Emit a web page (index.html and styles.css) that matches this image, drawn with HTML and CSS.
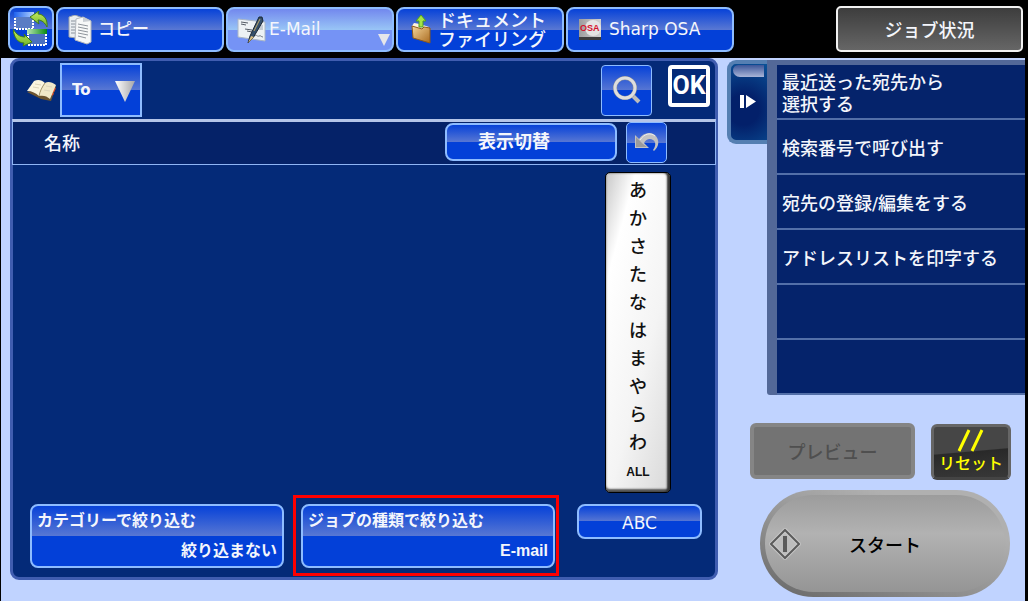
FILE: index.html
```html
<!DOCTYPE html>
<html lang="ja">
<head>
  <meta charset="UTF-8">
  <title>アドレス帳</title>
  <link rel="stylesheet" href="styles.css">
</head>
<body>

  <header class="topbar">
    <button type="button" class="btn mode-switch" aria-label="モード切替">
      <svg width="36" height="36" viewBox="0 0 36 36">
        <defs>
          <linearGradient id="green" x1="0" y1="0" x2="0" y2="1">
            <stop offset="0" stop-color="#c9ee62"/>
            <stop offset="1" stop-color="#6fb32a"/>
          </linearGradient>
          <linearGradient id="blueBar"><stop offset="0" stop-color="#1f62ee"/><stop offset="1" stop-color="#b4d4ff"/></linearGradient>
          <linearGradient id="greenBar"><stop offset="0" stop-color="#b9e6b4"/><stop offset="1" stop-color="#078a12"/></linearGradient>
        </defs>
        <rect x="2" y="3" width="18" height="15" fill="#5a7cc4" stroke="#fff" stroke-width="2" stroke-dasharray="2 1"/>
        <rect x="1" y="1" width="20" height="5" fill="url(#blueBar)"/>
        <rect x="15" y="20" width="18" height="14" fill="#4a70c0" stroke="#fff" stroke-width="2" stroke-dasharray="2 1"/>
        <rect x="14" y="18" width="20" height="5" fill="url(#greenBar)"/>
        <path d="M17 6 L26 0 L25 3 C31 3 35 9 34 16 C32 12 29 9 25 9 L26 13 Z" fill="url(#green)" stroke="#3f7d18" stroke-width="1"/>
        <path d="M19 31 L10 35 L11 32 C5 32 1 27 0 18 C4 24 7 26 12 26 L11 23 Z" fill="url(#green)" stroke="#3f7d18" stroke-width="1"/>
      </svg>
    </button>

    <nav class="tabs">
      <button type="button" class="btn tab">
        <svg width="26" height="30" viewBox="0 0 26 30">
          <path d="M2 2 L8 0 L16 3 V24 L2 22 Z" fill="#e9edf0" stroke="#9aa2ad" stroke-width="1"/>
          <path d="M4 6h5M4 9h5M4 12h5M4 15h5M4 18h5" stroke="#8a929c"/>
          <path d="M9 4 L16 2 L24 6 V27 L20 29 L8 25 Z" fill="#f7f8f8" stroke="#b2b7bd" stroke-width="1"/>
          <path d="M16 2 L16 7 L24 6 Z" fill="#c9ced4"/>
          <path d="M11 9l10 2M11 12l10 2M11 15l10 2M11 18l10 2M11 21l8 2" stroke="#8f959c"/>
        </svg>
        <span>コピー</span>
      </button>
      <button type="button" class="btn tab tab-active">
        <svg width="30" height="28" viewBox="0 0 30 28">
          <path d="M1 3 L28 6 L28 25 L1 21 Z" fill="#edf1f4" stroke="#aab6c6" stroke-width="1"/>
          <path d="M4 6l7 1M4 8l5 1M8 13l7 1M10 15l5 1" stroke="#555c66"/>
          <path d="M21 9h5v5h-5z" fill="#c4ccd4"/>
          <path d="M17 20c3-2 3 1 5 0 2-1 2 1 4 1" fill="none" stroke="#777e88"/>
          <path d="M22 1 L25 1 L26 5 L16 22 L11 27 L13 20 Z" fill="#35506b" stroke="#1b2835" stroke-width="1"/>
          <path d="M14 20 L11 27 L17 21 Z" fill="#d9bd82"/>
          <path d="M23 3 L17 15" stroke="#c1a765" stroke-width="1"/>
        </svg>
        <span>E-Mail</span>
        <svg class="tab-arrow" width="12" height="12" viewBox="0 0 12 12"><path d="M0 0h12L6 12z" fill="#e6e6ea"/></svg>
      </button>
      <button type="button" class="btn tab tab-two-line">
        <svg width="22" height="30" viewBox="0 0 22 30">
          <defs>
            <linearGradient id="folder" x1="0" y1="0" x2="1" y2="1">
              <stop offset="0" stop-color="#f6d79a"/><stop offset="1" stop-color="#a96a20"/>
            </linearGradient>
          </defs>
          <path d="M1 11 L3 8 L9 9 L18 12 L18 15 L2 14 Z" fill="#fff4dc"/>
          <path d="M10 0 L15 6 L12 6 L12 12 L8 12 L8 6 L5 6 Z" fill="#a4e445" stroke="#4f9a24" stroke-width="1"/>
          <path d="M1 11 L11 14 L13 12 L19 13 L19 28 L2 23 Z" fill="url(#folder)" stroke="#8e5a1c" stroke-width="1"/>
        </svg>
        <span>ドキュメント<br>ファイリング</span>
      </button>
      <button type="button" class="btn tab tab-osa">
        <svg width="22" height="22" viewBox="0 0 22 22">
          <defs>
            <linearGradient id="osa"><stop offset="0" stop-color="#9c9c9e"/><stop offset="1" stop-color="#d2d2d2"/></linearGradient>
          </defs>
          <rect width="22" height="21" fill="url(#osa)"/>
          <circle cx="14" cy="9" r="8" fill="#e4e4e4"/>
          <rect y="18" width="22" height="3" fill="#3b3b3d"/>
          <text x="1" y="12" class="osa-mark">OSA</text>
        </svg>
        <span>Sharp OSA</span>
      </button>
    </nav>

    <button type="button" class="job-status">ジョブ状況</button>
  </header>

  <main class="screen">
    <section class="panel">
      <div class="panel-head">
        <svg width="30" height="24" viewBox="0 0 30 24">
          <path d="M0 14 L14 21 L24 23 L29 9 L28 7 Z" fill="#6d5430"/>
          <path d="M26 14l2-4M25 17l1-2" stroke="#df4a2b" stroke-width="2"/>
          <path d="M7 3 C11 1 15 2 18 5 C15 9 13 13 12 18 C9 15 5 13 0 13 Z" fill="#fbf5de"/>
          <path d="M18 5 C21 3 25 4 29 7 L23 21 C20 18 16 17 12 18 C13 13 15 9 18 5 Z" fill="#f1e8c8"/>
          <path d="M18 5 C15 9 13 13 12 18" fill="none" stroke="#a89a70"/>
          <path d="M8 6l6 1M6 9l6 1M19 8l6 1M17 12l6 1" stroke="#ddd5ba"/>
        </svg>
        <div class="address-type">
          <select class="btn" aria-label="宛先の種類"><option>To</option></select>
          <svg width="20" height="21" viewBox="0 0 20 21">
            <defs>
              <linearGradient id="silver"><stop offset="0" stop-color="#fff"/><stop offset="1" stop-color="#a5a5a8"/></linearGradient>
            </defs>
            <path d="M0 0h20L10 21z" fill="url(#silver)"/>
          </svg>
        </div>
        <button type="button" class="btn search" aria-label="検索">
          <svg width="28" height="28" viewBox="0 0 28 28">
            <path d="M18 18 L26 26" stroke="#bcbcbc" stroke-width="4"/>
            <circle cx="12" cy="12" r="10" fill="none" stroke="#8b8e96" stroke-width="4"/>
            <circle cx="12" cy="12" r="10" fill="none" stroke="#dedede" stroke-width="3"/>
          </svg>
        </button>
        <button type="button" class="ok">OK</button>
      </div>

      <div class="name-bar">
        <span class="name-label">名称</span>
        <button type="button" class="btn switch-view">表示切替</button>
        <button type="button" class="btn undo" aria-label="戻る">
          <svg width="26" height="22" viewBox="0 0 26 22">
            <path d="M1 4 L5 8 C9 2 16 0 21 4 C26 9 25 16 20 20 L19 19 C22 15 22 11 19 9 C16 7 12 8 10 12 L15 17 L1 17 Z" fill="#c2c2c2"/>
            <path d="M2 6 V16 H13 L9 13" fill="#9b9b9d"/>
            <path d="M6 9 C10 3 16 1 21 5" fill="none" stroke="#ececec"/>
          </svg>
        </button>
      </div>

      <div class="address-list">
        <nav class="kana-index">
          <button type="button">あ</button>
          <button type="button">か</button>
          <button type="button">さ</button>
          <button type="button">た</button>
          <button type="button">な</button>
          <button type="button">は</button>
          <button type="button">ま</button>
          <button type="button">や</button>
          <button type="button">ら</button>
          <button type="button">わ</button>
          <button type="button" class="kana-all">ALL</button>
        </nav>
      </div>

      <div class="filters">
        <button type="button" class="btn filter">
          <span>カテゴリーで絞り込む</span>
          <span class="filter-value">絞り込まない</span>
        </button>
        <div class="highlight">
          <button type="button" class="btn filter">
            <span>ジョブの種類で絞り込む</span>
            <span class="filter-value">E-mail</span>
          </button>
        </div>
        <button type="button" class="btn abc">ABC</button>
      </div>
    </section>

    <aside class="side">
      <div class="menu">
        <button type="button" class="menu-handle" aria-label="メニューを閉じる">
          <svg width="16" height="14" viewBox="0 0 16 14"><path d="M0 0h4v13H0zM6 0l10 6.5L6 13z" fill="#fff"/></svg>
        </button>
        <ul class="menu-list">
          <li><button type="button">最近送った宛先から<br>選択する</button></li>
          <li><button type="button">検索番号で呼び出す</button></li>
          <li><button type="button">宛先の登録/編集をする</button></li>
          <li><button type="button">アドレスリストを印字する</button></li>
          <li></li>
          <li></li>
        </ul>
      </div>

      <div class="actions">
        <button type="button" class="preview" disabled>プレビュー</button>
        <button type="button" class="reset">
          <svg width="28" height="23" viewBox="0 0 28 23"><path d="M2 22 L12 1 M15 22 L25 1" stroke="#ff0" stroke-width="3"/></svg>
          <span>リセット</span>
        </button>
      </div>

      <button type="button" class="start">
        <svg width="32" height="32" viewBox="0 0 32 32">
          <path d="M16 2 L30 16 L16 30 L2 16 Z" fill="#bdbdbd" stroke="#c9c9c9" stroke-width="4"/>
          <path d="M16 2 L30 16 L16 30 L2 16 Z" fill="none" stroke="#5b5b5b" stroke-width="2"/>
          <rect x="14" y="8" width="4" height="16" fill="#5b5b5b"/>
        </svg>
        <span>スタート</span>
      </button>
    </aside>
  </main>

</body>
</html>
```
FILE: styles.css
```css
* {
  box-sizing: border-box;
}
body {
  margin: 0;
  min-height: 100vh;
  display: flex;
  flex-direction: column;
  background: #000;
  color: #f4f6fc;
  font-family: "DejaVu Sans", "Noto Sans CJK JP", sans-serif;
  font-size: 18px;
  font-weight: 500;
}
button,
select {
  margin: 0;
  padding: 0;
  border: none;
  color: inherit;
  font: inherit;
  cursor: pointer;
}
svg {
  display: block;
  flex: none;
}

/* shared glossy blue button */
.btn {
  border: 2px solid #8ebcff;
  border-radius: 8px;
  background: linear-gradient(#0742d8, #5877d3 50%, #0340d8 50%);
}

/* top bar */
.topbar {
  display: flex;
  gap: 2px;
  height: 58px;
  padding: 6px 5px 6px 8px;
}
.mode-switch {
  flex: none;
  width: 46px;
  display: flex;
  align-items: center;
  justify-content: center;
}
.tabs {
  flex: 1;
  display: flex;
  gap: 2px;
  padding-top: 1px;
}
.tab {
  position: relative;
  flex: 0 1 168px;
  display: flex;
  align-items: center;
  gap: 5px;
  padding-left: 9px;
  font-size: 17px;
  line-height: 19px;
  text-align: left;
  white-space: nowrap;
}
.tab-active {
  gap: 2px;
  background: linear-gradient(#7288ee, #98c4f6 50%, #7593f5 50%);
}
.tab-two-line {
  padding-left: 13px;
  font-size: 18px;
}
.tab-osa {
  gap: 8px;
  padding-left: 11px;
}
.tab-arrow {
  position: absolute;
  right: 2px;
  bottom: 4px;
}
.osa-mark {
  font: bold 9px "Liberation Sans", sans-serif;
  fill: #d5122c;
}
.job-status {
  flex: none;
  width: 187px;
  border: 2px solid #f2f2f2;
  border-radius: 5px;
  background: linear-gradient(#3d3d3d, #666);
}

/* main area */
.screen {
  flex: 1;
  display: grid;
  grid-template-columns: minmax(0, 1fr) 298px;
  gap: 9px;
  margin: 0 3px 0 1px;
  padding-left: 9px;
  background: #c0d3ff;
}
.panel {
  display: flex;
  flex-direction: column;
  align-self: start;
  border: 3px solid #405db0;
  border-radius: 9px;
  background: #042a78;
}
.panel-head {
  display: flex;
  align-items: center;
  height: 58px;
  padding: 0 5px 0 14px;
}
.address-type {
  position: relative;
  margin-left: 3px;
}
.address-type select {
  appearance: none;
  display: block;
  width: 82px;
  height: 54px;
  padding-left: 10px;
  border-radius: 0;
  font-size: 15px;
  font-weight: bold;
}
.address-type svg {
  position: absolute;
  top: 18px;
  right: 7px;
  pointer-events: none;
}
.search {
  width: 51px;
  height: 51px;
  margin-left: auto;
  display: flex;
  align-items: center;
  justify-content: center;
  border-width: 1px;
  border-radius: 4px;
}
.ok {
  width: 42px;
  height: 42px;
  margin: 0 0 9px 16px;
  border: 4px solid #fff;
  border-radius: 4px;
  background: #042a78;
  color: #fff;
  font: bold 25px/34px "Liberation Sans Narrow", Roboto, sans-serif;
}
.name-bar {
  display: flex;
  align-items: center;
  height: 46px;
  margin: 0 -1px;
  padding: 0 48px 2px 31px;
  border: 1px solid #8fb5f5;
  border-top: 3px solid #b5c5e8;
  background: #052268;
}
.name-label {
  flex: 1;
}
.switch-view {
  width: 172px;
  height: 38px;
  margin-right: 9px;
  padding-right: 34px;
  font-weight: bold;
  line-height: 32px;
}
.undo {
  width: 41px;
  height: 41px;
  display: flex;
  align-items: center;
  justify-content: center;
  border-width: 1px;
  border-radius: 5px;
}
.address-list {
  display: flex;
  justify-content: flex-end;
  padding: 7px 44px 2px 0;
}
.kana-index {
  display: flex;
  flex-direction: column;
  width: 66px;
  padding: 4px 0 7px;
  border: 1px solid #000;
  border-radius: 5px;
  background: linear-gradient(105deg, #c8c8c8, #fff 20%, #f4f4f4 60%, #d8d8d8);
  box-shadow: inset -3px 0 2px #333, inset 0 -3px 2px #555;
  color: #111;
}
.kana-index button {
  height: 28px;
  background: none;
  line-height: 28px;
}
.kana-index .kana-all {
  font: bold 12px/30px "Liberation Sans", sans-serif;
}
.filters {
  display: flex;
  align-items: flex-start;
  padding: 0 13px 1px 17px;
}
.filter {
  display: flex;
  flex-direction: column;
  width: 254px;
  height: 64px;
  padding: 0 5px;
  font: bold 16px/30px "Liberation Sans", "Noto Sans CJK JP", sans-serif;
  text-align: left;
}
.filters > .filter {
  margin: 9px 9px 0 0;
}
.filter-value {
  align-self: flex-end;
}
.highlight {
  padding: 6px 1px 5px 5px;
  border: 3px solid #f00;
}
.abc {
  width: 125px;
  height: 35px;
  margin: 9px 0 0 auto;
  padding-top: 2px;
  font-size: 17px;
}

/* right column */
.menu {
  display: flex;
  align-items: flex-start;
  padding-top: 2px;
}
.menu-handle {
  position: relative;
  width: 40px;
  height: 84px;
  display: flex;
  align-items: center;
  padding-left: 9px;
  border: 4px solid #557fb2;
  border-right: none;
  border-radius: 9px 0 0 9px;
  background: radial-gradient(circle at 35% 60%, #03206a 30%, #0a5298);
}
/* highlight along the top of the handle */
.menu-handle::before {
  content: "";
  position: absolute;
  top: 1px;
  left: 2px;
  width: 31px;
  height: 12px;
  border-radius: 6px 0 0 8px;
  background: linear-gradient(#3b5598, #a9b5d8);
}
.menu-list {
  flex: 1;
  margin: 0;
  padding: 0;
  border-left: 10px solid #536898;
  border-top: 5px solid #536898;
  border-bottom-left-radius: 3px;
  list-style: none;
}
.menu-list li {
  height: 55px;
  border-bottom: 2px solid #536fa8;
  background: #05236b;
}
.menu-list button {
  width: 100%;
  height: 100%;
  padding: 4px 0 0 5px;
  background: none;
  line-height: 22px;
  text-align: left;
}
.actions {
  display: flex;
  gap: 16px;
  margin: 28px 14px 0 23px;
}
.preview {
  flex: 1;
  height: 56px;
  border: 4px solid #858585;
  border-radius: 6px;
  background: #737373;
  color: #4f4f4f;
}
.reset {
  width: 80px;
  height: 56px;
  margin-top: 1px;
  display: flex;
  flex-direction: column;
  align-items: center;
  border: 3px solid #666;
  border-bottom-color: #444;
  border-radius: 6px;
  background: linear-gradient(175deg, #464646 48%, #292929 50%, #383838);
  color: #ff0;
  font-size: 16px;
  line-height: 24px;
}
.reset svg {
  margin-top: 2px;
}
.start {
  width: 250px;
  height: 107px;
  display: flex;
  align-items: center;
  gap: 48px;
  margin: 10px 0 4px 33px;
  padding-left: 4px;
  border: 5px solid transparent;
  border-radius: 54px;
  background: linear-gradient(#9c9c9c, #b2b2b2 40%, #959595) padding-box,
    linear-gradient(20deg, #666, #8c8c8c 35%, #b0b0b0 75%) border-box;
  color: #000;
}
```
